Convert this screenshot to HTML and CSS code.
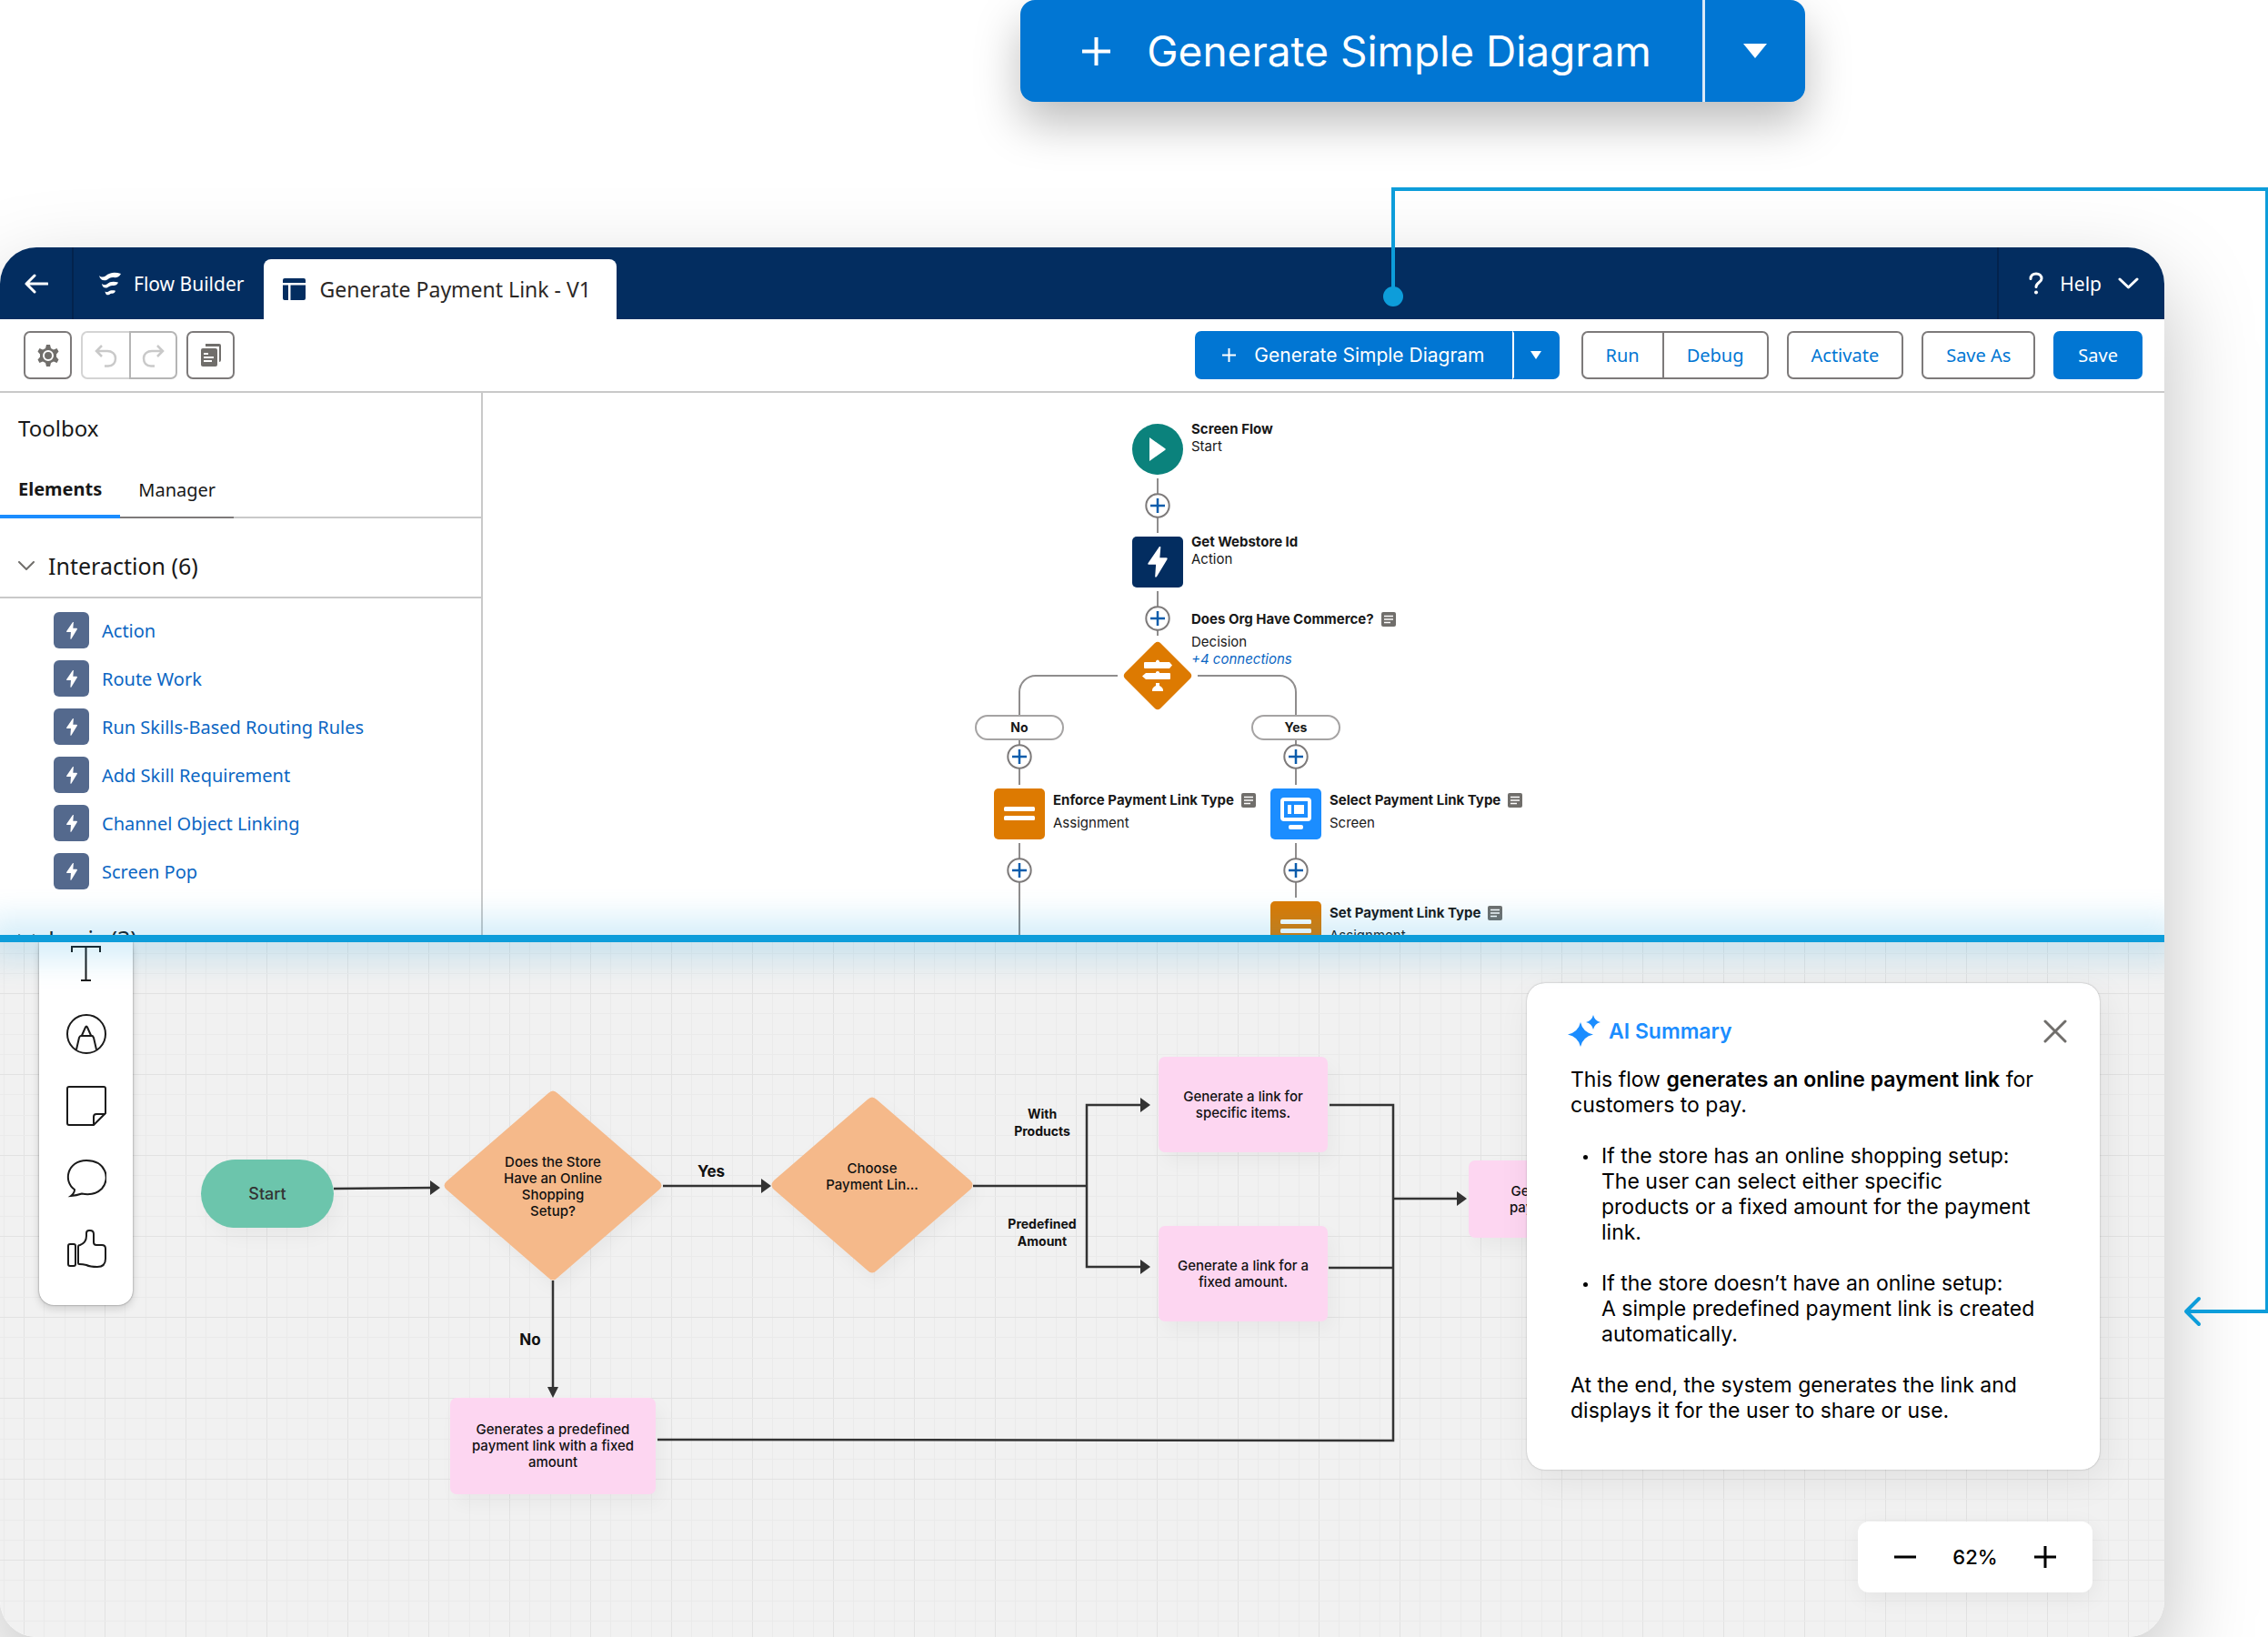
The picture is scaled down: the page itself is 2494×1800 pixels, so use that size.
FILE: index.html
```html
<!DOCTYPE html>
<html lang="en">
<head>
  <meta charset="UTF-8">
  <meta name="viewport" content="width=device-width, initial-scale=1.0">
  <title>Flow Builder - Generate Payment Link</title>
  <link rel="stylesheet" href="styles.css">
</head>
<body>
  <!-- shared icons -->
  <svg class="sprite" aria-hidden="true">
    <symbol id="bolt" viewBox="0 0 24 36">
      <path d="M14 0 L1 19 Q0 21 2 21 H10 L9 35 Q9.500 36.500 11 35 L23 15 Q24 13 22 13 H14.500 L15.500 1 Q15.500 -1 14 0 Z" fill="#fff"/>
    </symbol>
    <symbol id="plus" viewBox="0 0 28 28">
      <circle cx="14" cy="14" r="12.700" fill="#fff" stroke="#7d7a7a" stroke-width="2"/>
      <path d="M14 6v16M6 14h16" stroke="#0b5cab" stroke-width="2.500" fill="none"/>
    </symbol>
    <symbol id="note" viewBox="0 0 16 16">
      <rect width="16" height="16" rx="2" fill="#706e6b"/>
      <path d="M3 4.500h10M3 8h10M3 11.500h7" stroke="#fff" stroke-width="1.600" fill="none"/>
    </symbol>
    <symbol id="chevron" viewBox="0 0 18 10">
      <path d="M1 1l8 8 8-8" fill="none" stroke="currentColor" stroke-width="2" stroke-linecap="round"/>
    </symbol>
    <symbol id="equals" viewBox="0 0 34 18">
      <rect y="1" width="34" height="5" rx="1.500" fill="#fff"/>
      <rect y="11" width="34" height="5" rx="1.500" fill="#fff"/>
    </symbol>
  </svg>

  <div class="hero">
    <div class="hero-btn">
      <button type="button" class="hero-main">
        <svg width="31" height="31" viewBox="0 0 31 31"><path d="M15.500 0v31M0 15.500h31" stroke="#fff" stroke-width="4"/></svg>
        Generate Simple Diagram
      </button>
      <button type="button" class="hero-more" aria-label="More diagram options">
        <svg width="28" height="18" viewBox="0 0 28 18"><path d="M1 1h26L14 17z" fill="#fff"/></svg>
      </button>
    </div>
  </div>

  <div class="window">
    <header class="topbar">
      <button type="button" class="back" aria-label="Back">
        <svg width="26" height="22" viewBox="0 0 26 22"><path d="M25 11H2M11 2l-9 9 9 9" fill="none" stroke="#fff" stroke-width="3" stroke-linecap="round" stroke-linejoin="round"/></svg>
      </button>
      <a href="#" class="brand">
        <svg width="26" height="26" viewBox="0 0 26 26" fill="#fff">
          <path d="M1 4c2 2 5 2 7 .500 5-4.500 11-4.500 17-2.500-2 4-5 4.500-9 4-3 0-4 1-6 2.500-4 2-8 .500-9-4.500z"/>
          <path d="M4 13c2 1.500 4 1.500 5.500.500 4-3.500 8-3 12.500-2-1.500 3.500-4 3.500-6.500 3.500s-3.500 1-5 2c-3 1.500-6 0-6.500-4z"/>
          <path d="M7.500 21.500c1.500 1 2.500.800 3.500.200 2.500-1.700 5-1.700 8-1-1 3-3 3-4.500 3s-1.500.800-2.500 1.300c-2 1-4 0-4.500-3.500z"/>
        </svg>
        Flow Builder
      </a>
      <a href="#" class="doc-tab">
        <svg width="25" height="24" viewBox="0 0 25 24" fill="#032d60">
          <path d="M2 0h21a2 2 0 0 1 2 2v3H0V2a2 2 0 0 1 2-2zM0 7.500h6V24H2a2 2 0 0 1-2-2zM8.500 7.500H25V22a2 2 0 0 1-2 2H8.500z"/>
        </svg>
        Generate Payment Link - V1
      </a>
      <button type="button" class="help">
        <svg width="16" height="25" viewBox="0 0 16 25"><path d="M2 7.500C2 4 4.500 2 8 2s6 2 6 5.500c0 4-6 4-6 9" fill="none" stroke="#fff" stroke-width="3" stroke-linecap="round"/><circle cx="8" cy="22.500" r="2" fill="#fff"/></svg>
        Help
        <svg width="23" height="13" viewBox="0 0 23 13"><path d="M2 2l9.500 9L21 2" fill="none" stroke="#fff" stroke-width="3" stroke-linecap="round" stroke-linejoin="round"/></svg>
      </button>
    </header>

    <div class="toolbar">
      <button type="button" class="icon-btn" aria-label="Settings">
        <svg width="24" height="26" viewBox="0 0 24 26">
          <path d="M10 1h4l1 4 3 1.500 3.500-1.500 2 3.500-2.500 3v3l2.500 3-2 3.500L18 19.500 15 21l-1 4h-4l-1-4-3-1.500L2.500 21l-2-3.500 2.500-3v-3l-2.500-3 2-3.500L6 6.500 9 5z" fill="#706e6b"/>
          <circle cx="12" cy="13" r="5" fill="#706e6b" stroke="#fff" stroke-width="2"/>
        </svg>
      </button>
      <div class="btn-group undo-group">
        <button type="button" class="icon-btn" aria-label="Undo" disabled>
          <svg width="25" height="26" viewBox="0 0 25 26"><path d="M8 2L2 8l6 6M2 8h12c5 0 9 3 9 8s-3 8.500-8 8.500h-4" fill="none" stroke="#c9c9c9" stroke-width="2.500"/></svg>
        </button>
        <button type="button" class="icon-btn" aria-label="Redo" disabled>
          <svg width="25" height="26" viewBox="0 0 25 26"><path d="M17 2l6 6-6 6M23 8H11c-5 0-9 3-9 8s3 8.500 8 8.500h4" fill="none" stroke="#c9c9c9" stroke-width="2.500"/></svg>
        </button>
      </div>
      <button type="button" class="icon-btn" aria-label="Copy">
        <svg width="24" height="26" viewBox="0 0 24 26">
          <path d="M6 0h15a2 2 0 0 1 2 2v16a2 2 0 0 1-2 2V3H6z" fill="#706e6b"/>
          <rect x="1" y="5" width="18" height="20" rx="2" fill="#706e6b"/>
          <path d="M4 11h5M4 15h11M4 19h9" stroke="#fff" stroke-width="1.800"/>
        </svg>
      </button>

      <div class="toolbar-right">
        <div class="btn-group">
          <button type="button" class="btn primary generate">
            <svg width="15" height="15" viewBox="0 0 15 15"><path d="M7.500 0v15M0 7.500h15" stroke="#fff" stroke-width="2"/></svg>
            Generate Simple Diagram
          </button>
          <button type="button" class="btn primary more" aria-label="More diagram options">
            <svg width="14" height="9" viewBox="0 0 14 9"><path d="M1 0h12L7 9z" fill="#fff"/></svg>
          </button>
        </div>
        <div class="btn-group run-group">
          <button type="button" class="btn run">Run</button>
          <button type="button" class="btn">Debug</button>
        </div>
        <button type="button" class="btn">Activate</button>
        <button type="button" class="btn">Save As</button>
        <button type="button" class="btn primary">Save</button>
      </div>
    </div>

    <div class="workspace">
      <aside class="sidebar">
        <h2>Toolbox</h2>
        <div class="tabs">
          <button type="button" class="tab active">Elements</button>
          <button type="button" class="tab">Manager</button>
        </div>
        <button type="button" class="group-title"><svg width="18" height="10"><use href="#chevron"/></svg>Interaction (6)</button>
        <ul class="elements">
          <li><a href="#"><span class="el-icon"><svg width="14" height="19"><use href="#bolt"/></svg></span>Action</a></li>
          <li><a href="#"><span class="el-icon"><svg width="14" height="19"><use href="#bolt"/></svg></span>Route Work</a></li>
          <li><a href="#"><span class="el-icon"><svg width="14" height="19"><use href="#bolt"/></svg></span>Run Skills-Based Routing Rules</a></li>
          <li><a href="#"><span class="el-icon"><svg width="14" height="19"><use href="#bolt"/></svg></span>Add Skill Requirement</a></li>
          <li><a href="#"><span class="el-icon"><svg width="14" height="19"><use href="#bolt"/></svg></span>Channel Object Linking</a></li>
          <li><a href="#"><span class="el-icon"><svg width="14" height="19"><use href="#bolt"/></svg></span>Screen Pop</a></li>
        </ul>
        <button type="button" class="group-title"><svg width="18" height="10"><use href="#chevron"/></svg>Logic (3)</button>
      </aside>

      <main class="flow">
        <svg class="flow-lines" width="1200" height="596" viewBox="0 0 1200 596" fill="none" stroke="#8f8d8d" stroke-width="2">
          <path d="M742 94v60M742 218v49M698 311H608a18 18 0 0 0-18 18v102M786 311h90a18 18 0 0 1 18 18v102M590 495v101M894 495v60"/>
        </svg>

        <div class="shape start"><svg width="20" height="28" viewBox="0 0 20 28"><path d="M1 1v26l17-12q1.500-1 0-2z" fill="#fff"/></svg></div>
        <div class="shape webstore"><svg width="26" height="34"><use href="#bolt"/></svg></div>
        <svg class="decision" width="76" height="76" viewBox="0 0 76 76">
          <path d="M35 2q3-2.500 6 0l33 33q2.500 3 0 6L41 74q-3 2.500-6 0L2 41q-2.500-3 0-6z" fill="#dd7a01"/>
          <g fill="#fff">
            <path d="M36 22q2-3 4 0v1h11l3 3.500-3 3.500H24q-1 0-1-1v-5q0-1 1-1h12z"/>
            <path d="M36 34q2-2 4 0v1h11q1 0 1 1v5q0 1-1 1H25l-4-3.500 4-3.500h11z"/>
            <path d="M36 46h4v3q4 2 4 5v1H32v-1q0-3 4-5z"/>
          </g>
        </svg>
        <div class="shape enforce"><svg width="34" height="18"><use href="#equals"/></svg></div>
        <div class="shape select">
          <svg width="34" height="36" viewBox="0 0 34 36">
            <rect x="2" y="2" width="30" height="22" rx="2" fill="none" stroke="#fff" stroke-width="4"/>
            <rect x="8" y="8" width="4" height="10" fill="#fff"/><rect x="15" y="8" width="11" height="10" fill="#fff"/>
            <rect x="9" y="30" width="16" height="5" rx="2" fill="#fff"/>
          </svg>
        </div>
        <div class="shape settype"><svg width="34" height="18"><use href="#equals"/></svg></div>

        <button type="button" class="add add-1" aria-label="Add element"><svg width="28" height="28"><use href="#plus"/></svg></button>
        <button type="button" class="add add-2" aria-label="Add element"><svg width="28" height="28"><use href="#plus"/></svg></button>
        <button type="button" class="add add-3" aria-label="Add element"><svg width="28" height="28"><use href="#plus"/></svg></button>
        <button type="button" class="add add-4" aria-label="Add element"><svg width="28" height="28"><use href="#plus"/></svg></button>
        <button type="button" class="add add-5" aria-label="Add element"><svg width="28" height="28"><use href="#plus"/></svg></button>
        <button type="button" class="add add-6" aria-label="Add element"><svg width="28" height="28"><use href="#plus"/></svg></button>

        <span class="outcome outcome-no">No</span>
        <span class="outcome outcome-yes">Yes</span>

        <div class="label label-start"><strong>Screen Flow</strong><span>Start</span></div>
        <div class="label label-webstore"><strong>Get Webstore Id</strong><span>Action</span></div>
        <div class="label noted label-decision"><strong>Does Org Have Commerce? <svg width="16" height="16"><use href="#note"/></svg></strong><span>Decision</span><a href="#">+4 connections</a></div>
        <div class="label noted label-enforce"><strong>Enforce Payment Link Type <svg width="16" height="16"><use href="#note"/></svg></strong><span>Assignment</span></div>
        <div class="label noted label-select"><strong>Select Payment Link Type <svg width="16" height="16"><use href="#note"/></svg></strong><span>Screen</span></div>
        <div class="label noted label-settype"><strong>Set Payment Link Type <svg width="16" height="16"><use href="#note"/></svg></strong><span>Assignment</span></div>
      </main>
    </div>

    <div class="divider"></div>

    <section class="board">
      <svg class="board-lines" width="1700" height="764" viewBox="0 0 1700 764" fill="none" stroke="#333" stroke-width="2.500">
        <path d="M367 271l108-1M729 268h110M608 372v120M1070 268h125M1256 179h-61v178h61M1462 179h70v369L723 547M1461 358h71M1532 282h72"/>
        <path d="M473 262l11 8-11 8zM837 260l11 8-11 8zM602 489l6 12 6-12zM1254 171l11 8-11 8zM1254 349l11 8-11 8zM1602 274l11 8-11 8z" fill="#333" stroke="none"/>
      </svg>

      <div class="step step-start">Start</div>
      <div class="diamond diamond-store">
        <svg viewBox="0 0 240 209" width="240" height="209"><path d="M115 3q5-5 10 0l112 97q5 4.500 0 9L125 206q-5 5-10 0L3 109q-5-4.500 0-9z" fill="#f5b98a"/></svg>
        <p>Does the Store<br>Have an Online<br>Shopping<br>Setup?</p>
      </div>
      <div class="diamond diamond-choose">
        <svg viewBox="0 0 222 194" width="222" height="194"><path d="M106 3q5-5 10 0l103 89q5 5 0 10L116 191q-5 5-10 0L3 102q-5-5 0-10z" fill="#f5b98a"/></svg>
        <p>Choose<br>Payment Lin...</p>
      </div>
      <div class="step pink step-items">Generate a link for<br>specific items.</div>
      <div class="step pink step-fixed">Generate a link for a<br>fixed amount.</div>
      <div class="step pink step-predefined">Generates a predefined<br>payment link with a fixed<br>amount</div>
      <div class="step pink step-final">Generate the<br>payment link.</div>

      <span class="path-label path-yes">Yes</span>
      <span class="path-label path-no">No</span>
      <span class="path-label small path-products">With<br>Products</span>
      <span class="path-label small path-amount">Predefined<br>Amount</span>

      <nav class="tools">
        <button type="button" aria-label="Text">
          <svg width="44" height="44" viewBox="0 0 44 44"><path d="M6 11V5h31v6M21.500 5v37M16 42h11"/></svg>
        </button>
        <button type="button" aria-label="Pen">
          <svg width="44" height="44" viewBox="0 0 44 44"><circle cx="22" cy="22" r="21"/><path d="M11 39l3-13q.5-2 3-2.500l4-9q1-2 2 0l4 9q2.500.5 3 2.500l3 13M16 24h12"/></svg>
        </button>
        <button type="button" aria-label="Sticky note">
          <svg width="44" height="44" viewBox="0 0 44 44"><path d="M3 1h38q2 0 2 2v27L30 43H3q-2 0-2-2V3q0-2 2-2zM30 43v-9q0-3 3-3h10"/></svg>
        </button>
        <button type="button" aria-label="Comment">
          <svg width="44" height="44" viewBox="0 0 44 44"><path d="M9 35C-4 26 1 3 22 3s27 20 17 31c-6 6-14 7-22 5.500Q11 41.500 5 42q4-3 4-7z"/></svg>
        </button>
        <button type="button" aria-label="Reaction">
          <svg width="44" height="44" viewBox="0 0 44 44"><rect x="2" y="16" width="8" height="24" rx="2"/><path d="M13 19q0-2 2-2c5-2 7-6 7-10V4q0-3 3-3h1q4 0 4 4v9q0 3 3 3h6q4 0 4 4v11q0 9-9 9-8 0-12-2-4-1-8-1-1 0-1-1z"/></svg>
        </button>
      </nav>

      <article class="summary">
        <header>
          <svg width="36" height="36" viewBox="0 0 36 36" fill="#1b8dff">
            <path d="M14 8Q16.500 19 28 21.500Q16.500 24 14 35Q11.500 24 0 21.500Q11.500 19 14 8Z"/>
            <path d="M28 0Q29.500 6.500 36 8Q29.500 9.500 28 16Q26.500 9.500 20 8Q26.500 6.500 28 0Z"/>
          </svg>
          <h2>AI Summary</h2>
          <button type="button" aria-label="Close">
            <svg width="26" height="26" viewBox="0 0 26 26"><path d="M2 2l22 22M24 2L2 24" stroke="#706e6b" stroke-width="3" stroke-linecap="round"/></svg>
          </button>
        </header>
        <p>This flow <strong>generates an online payment link</strong> for customers to pay.</p>
        <ul>
          <li>If the store has an online shopping setup:<br>The user can select either specific<br>products or a fixed amount for the payment link.</li>
          <li>If the store doesn’t have an online setup:<br>A simple predefined payment link is created automatically.</li>
        </ul>
        <p>At the end, the system generates the link and displays it for the user to share or use.</p>
      </article>

      <div class="zoom">
        <button type="button" aria-label="Zoom out"><svg width="24" height="24" viewBox="0 0 24 24"><path d="M0 12h24" stroke="#000" stroke-width="3"/></svg></button>
        <span>62%</span>
        <button type="button" aria-label="Zoom in"><svg width="24" height="24" viewBox="0 0 24 24"><path d="M0 12h24M12 0v24" stroke="#000" stroke-width="3"/></svg></button>
      </div>
    </section>
  </div>

  <!-- line from the generate button to the board -->
  <svg class="callout" width="974" height="1270" viewBox="0 0 974 1270" fill="none" stroke="#0d9dda" stroke-width="4">
    <path d="M12 126V8H973v1234H884"/>
    <path d="M898 1228l-14 14 14 14" stroke-linecap="round" stroke-linejoin="round"/>
    <circle cx="12" cy="126" r="11" fill="#0d9dda" stroke="none"/>
  </svg>
</body>
</html>
```
FILE: styles.css
```css
* {
  box-sizing: border-box;
}

body {
  position: relative;
  margin: 0;
  background: #fff;
  color: #181818;
  font-family: "Noto Sans", "Open Sans", sans-serif;
  font-size: 20px;
  overflow-x: hidden;
}

button {
  font: inherit;
  color: inherit;
  background: none;
  border: 0;
  padding: 0;
  margin: 0;
  cursor: pointer;
}

a {
  color: inherit;
  text-decoration: none;
}

h2,
p,
ul {
  margin: 0;
  padding: 0;
}

svg {
  display: block;
  flex-shrink: 0;
}

.sprite {
  position: absolute;
  width: 0;
  height: 0;
}

/* big button above the window */
.hero {
  display: flex;
  height: 272px;
  padding-left: 45%;
}

.hero-btn {
  display: flex;
  height: 112px;
  border-radius: 16px;
  background: #0176d3;
  box-shadow: 0 24px 50px rgba(0, 0, 0, 0.26);
  color: #fff;
  font-family: Inter, sans-serif;
  font-size: 46px;
}

.hero-main {
  display: flex;
  align-items: center;
  gap: 40px;
  padding: 0 56px 0 68px;
}

.hero-more {
  display: flex;
  align-items: center;
  justify-content: center;
  width: 113px;
  border-left: 3px solid #dbe9f7;
}

/* window */
.window {
  margin-right: 114px;
  border-radius: 40px;
  overflow: hidden;
  background: #fff;
  box-shadow: 0 40px 100px rgba(0, 0, 0, 0.25);
}

.topbar {
  display: flex;
  height: 79px;
  background: #032d60;
  color: #fff;
  font-size: 21px;
}

.back {
  display: flex;
  align-items: center;
  justify-content: center;
  width: 81px;
  border-right: 2px solid #03234d;
}

.brand {
  display: flex;
  align-items: center;
  gap: 13px;
  padding: 0 22px 0 27px;
}

.doc-tab {
  display: flex;
  align-items: center;
  gap: 15px;
  margin-top: 13px;
  padding: 0 28px 0 21px;
  border-radius: 8px 8px 0 0;
  background: #fff;
  color: #2b2826;
  font-size: 23px;
}

.help {
  display: flex;
  align-items: center;
  gap: 18px;
  margin-left: auto;
  padding: 0 28px 0 33px;
  border-left: 2px solid #03234d;
}

.toolbar {
  display: flex;
  align-items: center;
  gap: 10px;
  height: 81px;
  padding: 0 24px 0 26px;
  border-bottom: 2px solid #c9c9c9;
}

.toolbar-right {
  display: flex;
  gap: 20px;
  margin-left: auto;
}

.btn-group {
  display: flex;
}

.icon-btn {
  display: flex;
  align-items: center;
  justify-content: center;
  width: 53px;
  height: 53px;
  border: 2px solid #7d7a7a;
  border-radius: 7px;
}

.undo-group .icon-btn {
  border-color: #d4d4d4;
}

.undo-group .icon-btn:first-child {
  border-right: 0;
  border-radius: 7px 0 0 7px;
}

.undo-group .icon-btn:last-child {
  border-color: #b5b5b5;
  border-radius: 0 7px 7px 0;
}

.btn {
  height: 53px;
  padding: 0 25px;
  border: 2px solid #7d7a7a;
  border-radius: 7px;
  background: #fff;
  color: #0176d3;
}

.primary {
  border-color: #0176d3;
  background: #0176d3;
  color: #fff;
}

.generate {
  display: flex;
  align-items: center;
  gap: 20px;
  padding: 0 28px;
  border-radius: 7px 0 0 7px;
  font-family: Inter, sans-serif;
  font-size: 21px;
}

.more {
  display: flex;
  align-items: center;
  justify-content: center;
  width: 52px;
  padding: 0;
  border-left-color: #fff;
  border-radius: 0 7px 7px 0;
}

.run-group {
  margin-left: 4px;
}

.run {
  border-right: 0;
  border-radius: 7px 0 0 7px;
}

.run + .btn {
  border-radius: 0 7px 7px 0;
}

/* sidebar */
.workspace {
  display: flex;
  height: 596px;
}

.sidebar {
  flex: 0 0 531px;
  overflow: hidden;
  border-right: 2px solid #c9c9c9;
}

.sidebar h2 {
  padding: 22px 20px 0;
  font-size: 24px;
  font-weight: 400;
  line-height: 34px;
}

.tabs {
  display: flex;
  height: 82px;
  border-bottom: 2px solid #c9c9c9;
}

.tab {
  padding: 20px 20px 0;
  border-bottom: 2px solid #7d7a7a;
  margin-bottom: -2px;
}

.tab.active {
  border-bottom: 4px solid #1b8dff;
  font-weight: 700;
}

.group-title {
  display: flex;
  align-items: center;
  gap: 15px;
  width: 100%;
  height: 88px;
  padding: 18px 20px 0;
  border-bottom: 2px solid #c9c9c9;
  font-size: 25px;
}

.group-title svg {
  color: #706e6b;
}

.elements {
  padding: 15px 0 0 59px;
  list-style: none;
  height: 322px;
}

.elements a {
  display: flex;
  align-items: center;
  gap: 14px;
  margin-bottom: 13px;
  color: #0b66c3;
}

.el-icon {
  display: flex;
  align-items: center;
  justify-content: center;
  width: 39px;
  height: 40px;
  border-radius: 6px;
  background: #54698d;
}

/* flow canvas */
.flow {
  position: relative;
  flex: 1;
  overflow: hidden;
  font-family: Inter, sans-serif;
  font-size: 15px;
}

.flow-lines,
.board-lines {
  position: absolute;
  left: 0;
  top: 0;
}

.shape {
  position: absolute;
  display: flex;
  align-items: center;
  justify-content: center;
  width: 56px;
  height: 56px;
  border-radius: 5px;
  background: #dd7a01;
}

.start {
  left: 714px;
  top: 34px;
  border-radius: 50%;
  background: #0b827c;
}

.webstore {
  left: 714px;
  top: 158px;
  background: #032d60;
}

.decision {
  position: absolute;
  left: 704px;
  top: 273px;
}

.enforce {
  left: 562px;
  top: 435px;
}

.select {
  left: 866px;
  top: 435px;
  background: #1b8dff;
}

.settype {
  left: 866px;
  top: 559px;
}

.add {
  position: absolute;
}

.add-1 {
  left: 728px;
  top: 110px;
}

.add-2 {
  left: 728px;
  top: 234px;
}

.add-3 {
  left: 576px;
  top: 386px;
}

.add-4 {
  left: 880px;
  top: 386px;
}

.add-5 {
  left: 576px;
  top: 511px;
}

.add-6 {
  left: 880px;
  top: 511px;
}

.outcome {
  position: absolute;
  top: 354px;
  width: 98px;
  height: 28px;
  border: 2px solid #a5a3a3;
  border-radius: 14px;
  background: #fff;
  font-size: 14px;
  font-weight: 700;
  line-height: 24px;
  text-align: center;
}

.outcome-no {
  left: 541px;
}

.outcome-yes {
  left: 845px;
}

.label {
  position: absolute;
  display: flex;
  flex-direction: column;
  line-height: 19px;
  white-space: nowrap;
}

.label strong {
  display: flex;
  align-items: center;
  gap: 8px;
}

.label a {
  color: #0b66c3;
  font-style: italic;
}

.noted strong {
  margin-bottom: 6px;
}

.label-start {
  left: 779px;
  top: 30px;
}

.label-webstore {
  left: 779px;
  top: 154px;
}

.label-decision {
  left: 779px;
  top: 239px;
}

.label-enforce {
  left: 627px;
  top: 438px;
}

.label-select {
  left: 931px;
  top: 438px;
}

.label-settype {
  left: 931px;
  top: 562px;
}

.divider {
  position: relative;
  z-index: 2;
  height: 8px;
  background: #0d9dda;
  box-shadow: 0 0 36px 16px rgba(13, 157, 218, 0.2);
}

/* whiteboard */
.board {
  position: relative;
  height: 764px;
  overflow: hidden;
  background-color: #f1f1f1;
  background-image:
    linear-gradient(#e2e2e2 1px, transparent 1px, transparent 22px, #eaeaea 22px, #eaeaea 23px, transparent 23px, transparent 45px, #eaeaea 45px, #eaeaea 46px, transparent 46px, transparent 67px, #eaeaea 67px, #eaeaea 68px, transparent 68px),
    linear-gradient(90deg, #e2e2e2 1px, transparent 1px, transparent 22px, #eaeaea 22px, #eaeaea 23px, transparent 23px, transparent 45px, #eaeaea 45px, #eaeaea 46px, transparent 46px, transparent 67px, #eaeaea 67px, #eaeaea 68px, transparent 68px);
  background-size: 89px 89px;
  background-position: 26px 56px;
  color: #111;
  font-family: Inter, sans-serif;
}

.step {
  position: absolute;
  display: flex;
  align-items: center;
  justify-content: center;
  font-size: 15px;
  font-weight: 500;
  line-height: 18px;
  text-align: center;
  box-shadow: 6px 10px 20px rgba(0, 0, 0, 0.04);
}

.step-start {
  left: 221px;
  top: 239px;
  width: 146px;
  height: 75px;
  border-radius: 38px;
  background: #6cc5ac;
  color: #333;
  font-size: 18px;
}

.pink {
  border-radius: 7px;
  background: #fdd6f1;
}

.step-items {
  left: 1274px;
  top: 126px;
  width: 186px;
  height: 105px;
}

.step-fixed {
  left: 1274px;
  top: 312px;
  width: 186px;
  height: 105px;
}

.step-predefined {
  left: 495px;
  top: 501px;
  width: 226px;
  height: 106px;
}

.step-final {
  left: 1615px;
  top: 240px;
  width: 186px;
  height: 85px;
}

.diamond {
  position: absolute;
  font-size: 15px;
  font-weight: 500;
  line-height: 18px;
  text-align: center;
}

.diamond svg {
  filter: drop-shadow(4px 8px 8px rgba(0, 0, 0, 0.04));
}

.diamond p {
  position: absolute;
  top: 70px;
  left: 0;
  width: 100%;
}

.diamond-store {
  left: 488px;
  top: 163px;
}

.diamond-choose {
  left: 848px;
  top: 170px;
}

.path-label {
  position: absolute;
  transform: translate(-50%, -50%);
  font-size: 17px;
  font-weight: 700;
  text-align: center;
}

.small {
  font-size: 14px;
  line-height: 19px;
}

.path-yes {
  left: 782px;
  top: 252px;
}

.path-no {
  left: 583px;
  top: 437px;
}

.path-products {
  left: 1146px;
  top: 198px;
}

.path-amount {
  left: 1146px;
  top: 319px;
}

/* drawing tools */
.tools {
  position: absolute;
  left: 43px;
  top: 0;
  display: flex;
  flex-direction: column;
  align-items: center;
  gap: 35px;
  width: 103px;
  height: 399px;
  border-radius: 0 0 16px 16px;
  background: #fff;
  box-shadow: 0 0 2px rgba(0, 0, 0, 0.5), 0 4px 10px rgba(0, 0, 0, 0.15);
}

.tools svg {
  fill: none;
  stroke: #1a1a1a;
  stroke-width: 2;
}

/* summary card */
.summary {
  position: absolute;
  right: 71px;
  top: 45px;
  width: 630px;
  padding: 35px 36px 51px 48px;
  border-radius: 20px;
  background: #fff;
  box-shadow: 0 0 2px rgba(0, 0, 0, 0.3), 6px 12px 40px rgba(0, 0, 0, 0.07);
  color: #000;
  font-size: 23px;
  line-height: 28px;
}

.summary header {
  display: flex;
  align-items: center;
  gap: 9px;
  margin: 0 0 21px -3px;
}

.summary h2 {
  color: #1b8dff;
  font-size: 23px;
  font-weight: 600;
}

.summary header button {
  margin-left: auto;
}

.summary strong {
  font-weight: 600;
}

.summary ul {
  padding-left: 34px;
  list-style: none;
}

.summary li {
  position: relative;
  margin: 28px 0;
}

.summary li::before {
  content: "";
  position: absolute;
  left: -20px;
  top: 13px;
  width: 5px;
  height: 5px;
  border-radius: 50%;
  background: #000;
}

.zoom {
  position: absolute;
  right: 79px;
  bottom: 49px;
  display: flex;
  align-items: center;
  justify-content: space-between;
  width: 258px;
  height: 78px;
  padding: 0 40px;
  border-radius: 12px;
  background: #fff;
  box-shadow: 2px 6px 24px rgba(0, 0, 0, 0.06);
  color: #000;
  font-size: 22px;
  font-weight: 500;
}

.callout {
  position: absolute;
  right: 0;
  top: 200px;
  z-index: 3;
  pointer-events: none;
}
```
